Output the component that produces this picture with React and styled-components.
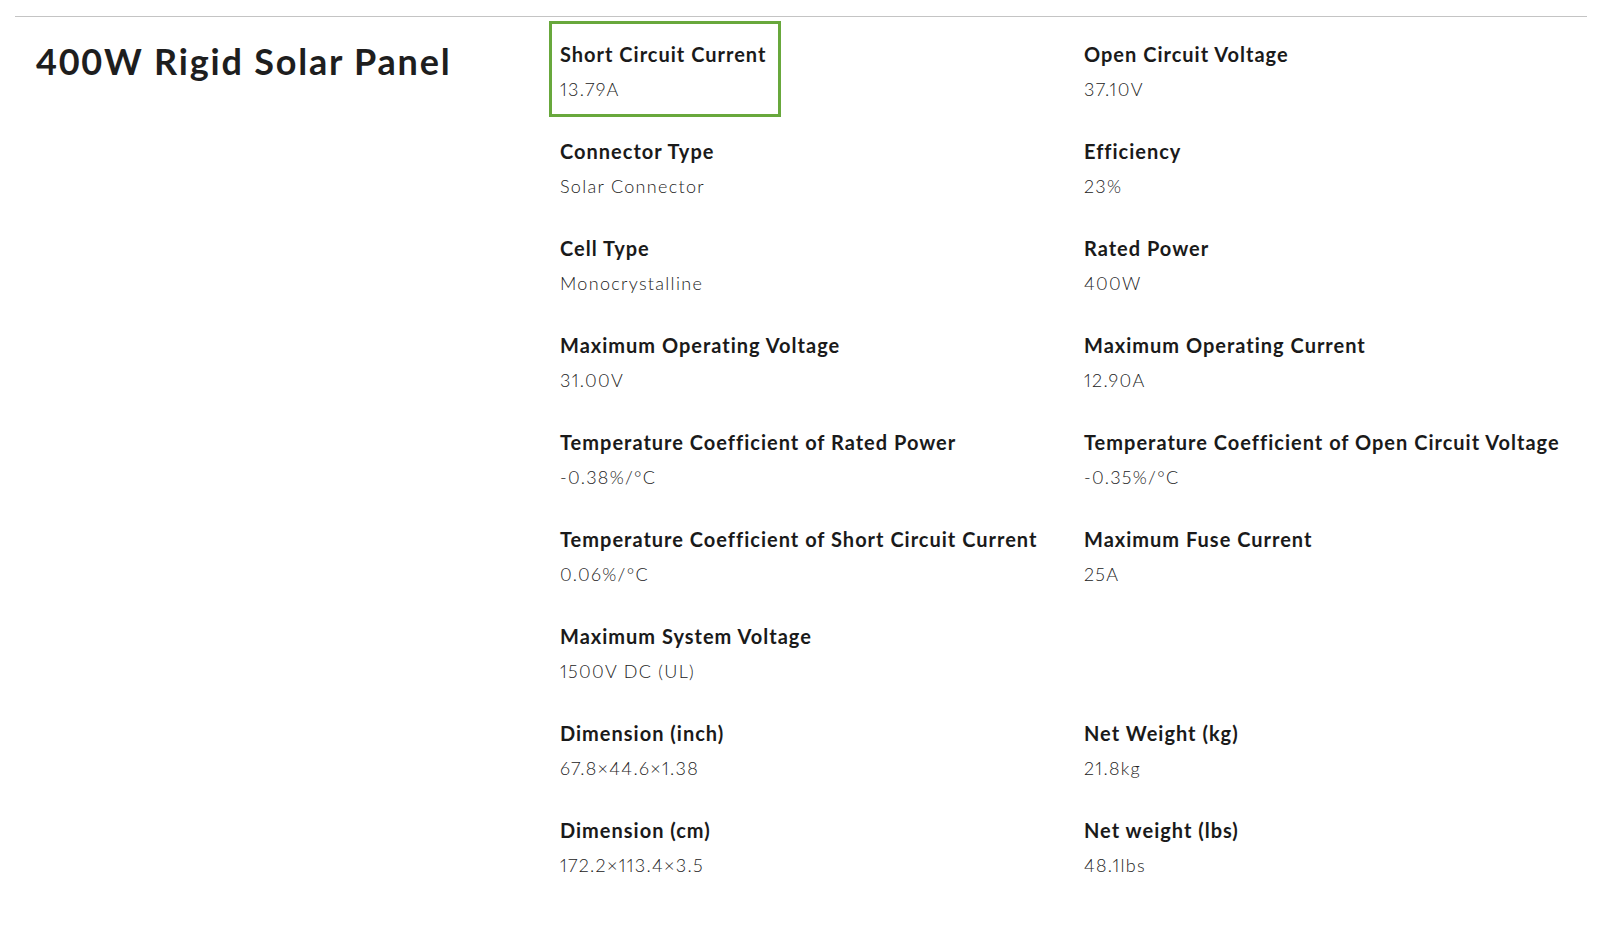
import React from 'react';
import styled, { createGlobalStyle } from 'styled-components';

const GlobalStyle = createGlobalStyle`
  html, body {
    margin: 0;
    padding: 0;
    background: #ffffff;
  }
  body {
    font-family: Lato, "Liberation Sans", Arial, sans-serif;
    color: #1c1c1c;
  }
`;

const Page = styled.div`
  padding: 16px 13px 40px 15px;
`;

const Section = styled.section`
  display: flex;
  border-top: 1px solid #c4c4c4;
`;

const TitleColumn = styled.div`
  width: 534px;
  flex-shrink: 0;
  padding: 24px 0 0 21px;
  box-sizing: border-box;
`;

const Title = styled.h2`
  margin: 0;
  font-size: 36px;
  line-height: 41px;
  font-weight: 700;
  letter-spacing: 1.8px;
  color: #1e1e1e;
`;

const SpecGrid = styled.div`
  flex: 1;
  display: grid;
  grid-template-columns: 524px 1fr;
  row-gap: 1px;
  padding-top: 4px;
`;

const SpecItem = styled.div`
  justify-self: start;
  padding: 16px 12px 11px 8px;
  border: 3px solid ${p => (p.$active ? '#68a83c' : 'transparent')};
`;

const SpecLabel = styled.div`
  font-size: 20px;
  line-height: 28px;
  font-weight: 700;
  letter-spacing: 1px;
  color: #1a1a1a;
  margin-bottom: 7px;
`;

const SpecValue = styled.div`
  font-size: 18px;
  line-height: 28px;
  font-weight: 300;
  letter-spacing: 1.3px;
  font-variant-numeric: proportional-nums;
  color: #222222;
`;

const specs = [
  ['Short Circuit Current', '13.79A'],
  ['Open Circuit Voltage', '37.10V'],
  ['Connector Type', 'Solar Connector'],
  ['Efficiency', '23%'],
  ['Cell Type', 'Monocrystalline'],
  ['Rated Power', '400W'],
  ['Maximum Operating Voltage', '31.00V'],
  ['Maximum Operating Current', '12.90A'],
  ['Temperature Coefficient of Rated Power', '-0.38%/°C'],
  ['Temperature Coefficient of Open Circuit Voltage', '-0.35%/°C'],
  ['Temperature Coefficient of Short Circuit Current', '0.06%/°C'],
  ['Maximum Fuse Current', '25A'],
  ['Maximum System Voltage', '1500V DC (UL)'],
  null,
  ['Dimension (inch)', '67.8×44.6×1.38'],
  ['Net Weight (kg)', '21.8kg'],
  ['Dimension (cm)', '172.2×113.4×3.5'],
  ['Net weight (lbs)', '48.1lbs'],
];

export default function App() {
  return (
    <>
      <GlobalStyle />
      <Page>
        <Section>
          <TitleColumn>
            <Title>400W Rigid Solar Panel</Title>
          </TitleColumn>
          <SpecGrid>
            {specs.map((spec, i) =>
              spec ? (
                <SpecItem key={i} $active={i === 0}>
                  <SpecLabel>{spec[0]}</SpecLabel>
                  <SpecValue>{spec[1]}</SpecValue>
                </SpecItem>
              ) : (
                <div key={i} />
              )
            )}
          </SpecGrid>
        </Section>
      </Page>
    </>
  );
}
